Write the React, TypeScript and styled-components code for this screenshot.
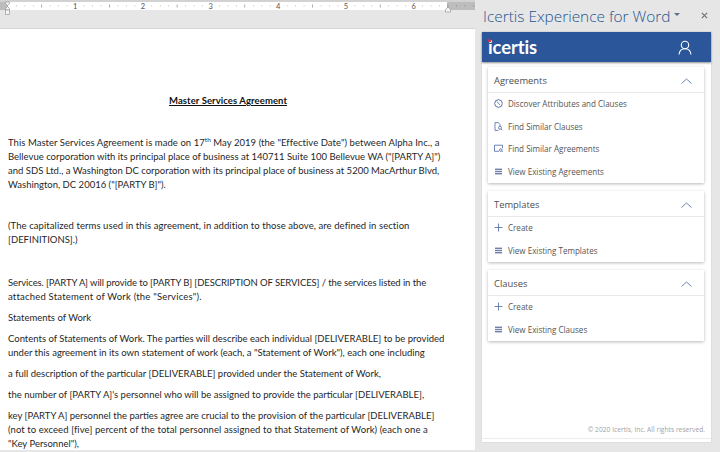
import React from 'react';
import styled, { createGlobalStyle } from 'styled-components';

const GlobalStyle = createGlobalStyle`
  html, body {
    margin: 0;
    padding: 0;
    background: #e6e6e6;
  }
`;

const Window = styled.div`
  width: 720px;
  height: 452px;
  display: flex;
  overflow: hidden;
  background: #e6e6e6;
`;

const DocArea = styled.div`
  width: 475px;
  height: 450px;
  display: flex;
  flex-direction: column;
`;

const RulerBar = styled.svg`
  display: block;
  width: 475px;
  height: 16px;
  flex: none;
`;

const Page = styled.div`
  margin-top: 12px;
  flex: 1;
  min-height: 0;
  overflow: hidden;
  background: #fff;
  border-top: 1px solid #d4d4d4;
  padding: 65px 0 0 8px;
  font-family: Lato, 'Open Sans', sans-serif;
  font-size: 9.5px;
  line-height: 14px;
  color: #1f1f1f;
`;

const DocTitle = styled.div`
  margin-left: 161px;
  font-weight: 700;
  letter-spacing: 0.08px;
  text-decoration: underline;
  color: #111;
  white-space: nowrap;
`;

const Para = styled.div<{ $gap: number }>`
  margin-top: ${(p) => p.$gap}px;
`;

const Line = styled.div<{ $track?: number }>`
  white-space: nowrap;
  letter-spacing: ${(p) => p.$track ?? 0}px;
`;

const Sup = styled.sup`
  font-size: 6.5px;
  line-height: 0;
`;

const Pane = styled.div`
  width: 245px;
  height: 442px;
  flex: none;
  display: flex;
  flex-direction: column;
  padding-left: 7px;
`;

const PaneTitleRow = styled.div`
  height: 32px;
  width: 229px;
  display: flex;
  align-items: center;
  font-family: 'Open Sans', sans-serif;
  color: #235590;
`;

const PaneTitle = styled.div`
  font-size: 15.4px;
  font-weight: 300;
  padding-left: 1px;
  white-space: nowrap;
`;

const Caret = styled.div`
  width: 0;
  height: 0;
  margin: -3px 0 0 3px;
  border-left: 3px solid transparent;
  border-right: 3px solid transparent;
  border-top: 3px solid #5a6f88;
`;

const CloseBtn = styled.div`
  margin: -1px 3px 0 auto;
  color: #6b6b6b;
  display: flex;
`;

const PaneBody = styled.div`
  width: 229px;
  height: 410px;
  background: #fff;
  display: flex;
  flex-direction: column;
  box-shadow: 0 0 0 0.5px #d6d6d6;
  font-family: 'Open Sans', sans-serif;
`;

const Banner = styled.div`
  height: 30px;
  flex: none;
  background: #2b579a;
  box-shadow: 0 1px 2px rgba(0, 0, 0, 0.45);
  display: flex;
  align-items: center;
  justify-content: space-between;
  padding: 0 19px 0 6px;
`;

const Logo = styled.div`
  position: relative;
  font-family: Lato, sans-serif;
  font-weight: 700;
  font-size: 18.4px;
  letter-spacing: -0.1px;
  color: #fff;
  line-height: 1;
  &::before {
    content: '';
    position: absolute;
    left: 0;
    top: 1px;
    width: 3px;
    height: 3.5px;
    background: #c8313e;
    border-radius: 1px 2px 0 0;
  }
`;

const UserIcon = styled.svg`
  display: block;
  width: 14px;
  height: 15px;
`;

const CardList = styled.div`
  flex: 1;
  padding: 4.5px 7px 0 6px;
  display: flex;
  flex-direction: column;
  gap: 8px;
`;

const Card = styled.section`
  background: #fff;
  box-shadow: 0 1px 3px rgba(0, 0, 0, 0.28);
`;

const CardHead = styled.div`
  height: 26px;
  border-bottom: 1px solid #eaeaea;
  box-sizing: border-box;
  display: flex;
  align-items: center;
  justify-content: space-between;
  padding: 3px 12px 0 6px;
  font-size: 9.4px;
  color: #4f4f4f;
`;

const Chevron = styled.svg`
  display: block;
  width: 11px;
  height: 6px;
`;

const Rows = styled.div`
  padding: 0 0 0 6px;
`;

const Row = styled.div`
  height: 22.5px;
  display: flex;
  align-items: center;
  font-size: 8.05px;
  color: #555;
  white-space: nowrap;
`;

const RowIcon = styled.svg`
  display: block;
  width: 9px;
  height: 9px;
  margin-right: 5px;
  flex: none;
  color: #5f78ad;
`;

const Copyright = styled.div`
  margin: auto 0 3px;
  height: 13px;
  border-bottom: 1px solid #ececec;
  padding-right: 6px;
  text-align: right;
  font-size: 6.7px;
  line-height: 10px;
  color: #a3a3a3;
  white-space: nowrap;
`;

const Ruler = () => {
  const inch = 67.7;
  const ticks: React.ReactNode[] = [];
  for (let i = 0; i < 56; i++) {
    const x = 7.5 + (i * inch) / 8;
    if (i === 0 || x > 474) continue;
    if (i % 8 === 0) {
      ticks.push(
        <text key={i} x={x} y={8.8} fontSize={7.5} textAnchor="middle" fontFamily="Lato, sans-serif" fill="#555">
          {i / 8}
        </text>,
      );
    } else if (i % 4 === 0) {
      ticks.push(<rect key={i} x={x} y={4.5} width={0.7} height={3} fill="#8a8a8a" />);
    } else {
      ticks.push(<rect key={i} x={x} y={5.5} width={0.8} height={0.8} fill={x > 447 ? '#777' : '#9a9a9a'} />);
    }
  }
  return (
    <RulerBar viewBox="0 0 475 16">
      <rect width="475" height="2" fill="#d2d2d2" />
      <rect y="2" width="475" height="8" fill="#fff" />
      <rect y="2" width="8" height="8" fill="#bdbdbd" />
      <rect x="447" y="2" width="28" height="8" fill="#bdbdbd" />
      {ticks}
      <path d="M5.500 2h4v1.500l-2 2-2-2z M5.500 10V8.500l2-2 2 2V10z" fill="#f4f4f4" stroke="#8c8c8c" strokeWidth=".6" />
      <rect x="5.5" y="10" width="4" height="4.5" fill="#f4f4f4" stroke="#8c8c8c" strokeWidth=".6" />
      <path d="M445.500 12V9.500l2.500-2.500 2.500 2.500V12z" fill="#f4f4f4" stroke="#8c8c8c" strokeWidth=".6" />
    </RulerBar>
  );
};

const DiscoverIcon = () => (
  <RowIcon viewBox="0 0 9 9" fill="none" stroke="currentColor" strokeWidth="1">
    <circle cx="4.5" cy="4.5" r="3.8" />
    <path d="M3 2.600l1.700 2 1.400 1.300" />
  </RowIcon>
);

const ClausesIcon = () => (
  <RowIcon viewBox="0 0 9 9" fill="none" stroke="currentColor" strokeWidth=".9">
    <path d="M6 4V2.600L4.400.6H1v7.800h3.500" />
    <circle cx="6" cy="5.8" r="1.5" />
    <path d="M7 7l1.200 1.200" />
  </RowIcon>
);

const AgreementsIcon = () => (
  <RowIcon viewBox="0 0 9 9" fill="none" stroke="currentColor" strokeWidth=".9">
    <path d="M5 7.300H.5V1.200h8v3" />
    <circle cx="6.8" cy="6" r="1.3" />
    <path d="M7.700 7l1 1" />
  </RowIcon>
);

const ListIcon = () => (
  <RowIcon viewBox="0 0 9 9" fill="#6f7fa6">
    <rect x="1" y="1.6" width="7" height="1.4" />
    <rect x="1" y="3.8" width="7" height="1.4" />
    <rect x="1" y="6" width="7" height="1.4" />
  </RowIcon>
);

const PlusIcon = () => (
  <RowIcon viewBox="0 0 9 9" fill="none" stroke="currentColor" strokeWidth=".9">
    <path d="M4.500.5v8M.5 4.500h8" />
  </RowIcon>
);

const sections = [
  {
    title: 'Agreements',
    rows: [
      { icon: <DiscoverIcon />, label: 'Discover Attributes and Clauses' },
      { icon: <ClausesIcon />, label: 'Find Similar Clauses' },
      { icon: <AgreementsIcon />, label: 'Find Similar Agreements' },
      { icon: <ListIcon />, label: 'View Existing Agreements' },
    ],
  },
  {
    title: 'Templates',
    rows: [
      { icon: <PlusIcon />, label: 'Create' },
      { icon: <ListIcon />, label: 'View Existing Templates' },
    ],
  },
  {
    title: 'Clauses',
    rows: [
      { icon: <PlusIcon />, label: 'Create' },
      { icon: <ListIcon />, label: 'View Existing Clauses' },
    ],
  },
];

export default function App() {
  return (
    <Window>
      <GlobalStyle />
      <DocArea>
        <Ruler />
        <Page>
          <DocTitle>Master Services Agreement</DocTitle>
          <Para $gap={28}>
            <Line $track={0.05}>
              This Master Services Agreement is made on 17<Sup>th</Sup> May 2019 (the "Effective Date") between Alpha Inc., a
            </Line>
            <Line>Bellevue corporation with its principal place of business at 140711 Suite 100 Bellevue WA ("[PARTY A]")</Line>
            <Line>and SDS Ltd., a Washington DC corporation with its principal place of business at 5200 MacArthur Blvd,</Line>
            <Line>Washington, DC 20016 ("[PARTY B]").</Line>
          </Para>
          <Para $gap={27}>
            <Line $track={0.07}>(The capitalized terms used in this agreement, in addition to those above, are defined in section</Line>
            <Line>[DEFINITIONS].)</Line>
          </Para>
          <Para $gap={29}>
            <Line $track={-0.1}>Services. [PARTY A] will provide to [PARTY B] [DESCRIPTION OF SERVICES] / the services listed in the</Line>
            <Line $track={0.2}>attached Statement of Work (the "Services").</Line>
          </Para>
          <Para $gap={7}>
            <Line>Statements of Work</Line>
          </Para>
          <Para $gap={7}>
            <Line>Contents of Statements of Work. The parties will describe each individual [DELIVERABLE] to be provided</Line>
            <Line>under this agreement in its own statement of work (each, a "Statement of Work"), each one including</Line>
          </Para>
          <Para $gap={7}>
            <Line>a full description of the particular [DELIVERABLE] provided under the Statement of Work,</Line>
          </Para>
          <Para $gap={7}>
            <Line>the number of [PARTY A]'s personnel who will be assigned to provide the particular [DELIVERABLE],</Line>
          </Para>
          <Para $gap={7}>
            <Line>key [PARTY A] personnel the parties agree are crucial to the provision of the particular [DELIVERABLE]</Line>
            <Line $track={0.09}>(not to exceed [five] percent of the total personnel assigned to that Statement of Work) (each one a</Line>
            <Line>"Key Personnel"),</Line>
          </Para>
        </Page>
      </DocArea>
      <Pane>
        <PaneTitleRow>
          <PaneTitle>Icertis Experience for Word</PaneTitle>
          <Caret />
          <CloseBtn>
            <svg width="7" height="7" viewBox="0 0 8 8" fill="none" stroke="currentColor" strokeWidth="1.2">
              <path d="M1 1l6 6M7 1L1 7" />
            </svg>
          </CloseBtn>
        </PaneTitleRow>
        <PaneBody>
          <Banner>
            <Logo>icertis</Logo>
            <UserIcon viewBox="0 0 14 15" fill="none" stroke="#fff" strokeWidth="1.1">
              <circle cx="7" cy="5" r="3.7" />
              <path d="M1 14.500c.4-3.600 2.800-5.800 6-5.800s5.600 2.200 6 5.800" />
            </UserIcon>
          </Banner>
          <CardList>
            {sections.map((section) => (
              <Card key={section.title}>
                <CardHead>
                  {section.title}
                  <Chevron viewBox="0 0 11 6" fill="none" stroke="#6d84b4" strokeWidth="1">
                    <path d="M.5 5.500l5-4.500 5 4.500" />
                  </Chevron>
                </CardHead>
                <Rows>
                  {section.rows.map((row) => (
                    <Row key={row.label}>
                      {row.icon}
                      {row.label}
                    </Row>
                  ))}
                </Rows>
              </Card>
            ))}
          </CardList>
          <Copyright>© 2020 Icertis, Inc. All rights reserved.</Copyright>
        </PaneBody>
      </Pane>
    </Window>
  );
}
